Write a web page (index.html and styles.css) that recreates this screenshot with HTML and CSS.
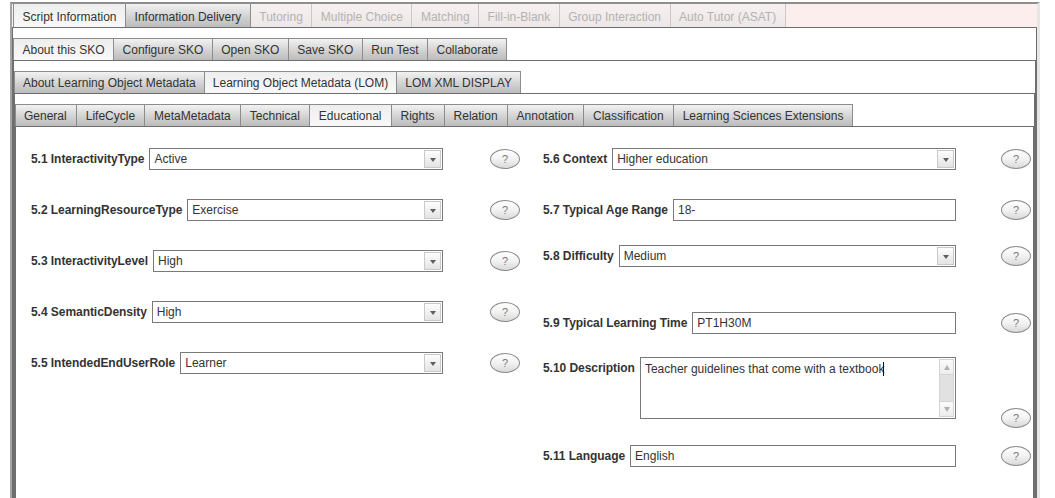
FILE: index.html
```html
<!DOCTYPE html>
<html>
<head>
<meta charset="utf-8">
<title>Educational</title>
<link rel="stylesheet" href="styles.css">
</head>
<body>
<div class="frame">
  <div class="tabbar top mid">
    <div class="tab sel">Script Information</div>
    <div class="tab">Information Delivery</div>
    <div class="tab dis">Tutoring</div>
    <div class="tab dis">Multiple Choice</div>
    <div class="tab dis">Matching</div>
    <div class="tab dis">Fill-in-Blank</div>
    <div class="tab dis">Group Interaction</div>
    <div class="tab dis">Auto Tutor (ASAT)</div>
  </div>
  <div class="panel">
    <div class="tabbar mid">
      <div class="tab sel">About this SKO</div>
      <div class="tab">Configure SKO</div>
      <div class="tab">Open SKO</div>
      <div class="tab">Save SKO</div>
      <div class="tab">Run Test</div>
      <div class="tab">Collaborate</div>
    </div>
    <div class="panel">
      <div class="tabbar">
        <div class="tab">About Learning Object Metadata</div>
        <div class="tab sel">Learning Object Metadata (LOM)</div>
        <div class="tab">LOM XML DISPLAY</div>
      </div>
      <div class="panel">
        <div class="tabbar wide">
          <div class="tab">General</div>
          <div class="tab">LifeCycle</div>
          <div class="tab">MetaMetadata</div>
          <div class="tab">Technical</div>
          <div class="tab sel">Educational</div>
          <div class="tab">Rights</div>
          <div class="tab">Relation</div>
          <div class="tab">Annotation</div>
          <div class="tab">Classification</div>
          <div class="tab">Learning Sciences Extensions</div>
        </div>
        <div class="panel content">
          <div class="col left">
            <div class="row">
              <div class="field"><span class="lbl">5.1 InteractivityType</span><div class="box select"><span class="val">Active</span><span class="dd"></span></div></div>
              <div class="help">?</div>
            </div>
            <div class="row">
              <div class="field"><span class="lbl">5.2 LearningResourceType</span><div class="box select"><span class="val">Exercise</span><span class="dd"></span></div></div>
              <div class="help">?</div>
            </div>
            <div class="row">
              <div class="field"><span class="lbl">5.3 InteractivityLevel</span><div class="box select"><span class="val">High</span><span class="dd"></span></div></div>
              <div class="help">?</div>
            </div>
            <div class="row">
              <div class="field"><span class="lbl">5.4 SemanticDensity</span><div class="box select"><span class="val">High</span><span class="dd"></span></div></div>
              <div class="help">?</div>
            </div>
            <div class="row">
              <div class="field"><span class="lbl">5.5 IntendedEndUserRole</span><div class="box select"><span class="val">Learner</span><span class="dd"></span></div></div>
              <div class="help">?</div>
            </div>
          </div>
          <div class="col right">
            <div class="row">
              <div class="field"><span class="lbl">5.6 Context</span><div class="box select"><span class="val">Higher education</span><span class="dd"></span></div></div>
              <div class="help">?</div>
            </div>
            <div class="row">
              <div class="field"><span class="lbl">5.7 Typical Age Range</span><div class="box"><span class="val">18-</span></div></div>
              <div class="help">?</div>
            </div>
            <div class="row mt24">
              <div class="field"><span class="lbl">5.8 Difficulty</span><div class="box select"><span class="val">Medium</span><span class="dd"></span></div></div>
              <div class="help">?</div>
            </div>
            <div class="row mt45">
              <div class="field"><span class="lbl">5.9 Typical Learning Time</span><div class="box"><span class="val">PT1H30M</span></div></div>
              <div class="help">?</div>
            </div>
            <div class="row tall mt23">
              <div class="field"><span class="lbl">5.10 Description</span><div class="box area"><span class="text">Teacher guidelines that come with a textbook<span class="caret"></span></span><span class="sb"><span class="sb-btn up"></span><span class="sb-thumb"></span><span class="sb-btn down"></span></span></div></div>
              <div class="help">?</div>
            </div>
            <div class="row mt26">
              <div class="field"><span class="lbl">5.11 Language</span><div class="box"><span class="val">English</span></div></div>
              <div class="help">?</div>
            </div>
          </div>
        </div>
      </div>
    </div>
  </div>
</div>
</body>
</html>
```

FILE: styles.css
```css
* { box-sizing: border-box; }
html, body { margin: 0; height: 498px; overflow: hidden; background: #fff; }
body { font-family: "Liberation Sans", Arial, sans-serif; font-size: 12px; color: #333; }

.frame {
  margin: 2px 0 0 10px;
  width: 1030px;
  height: 496px;
  border-top: 2px solid #8e8e8e;
  border-left: 2px solid #a4a4a4;
  border-right: 3px solid #e6e6e6;
  display: flex;
  flex-direction: column;
}

.tabbar { display: flex; height: 22px; flex: none; }
.tabbar.top { height: 23px; background: #fdeeee; padding-left: 1px; }
.tabbar.top .tab { border-top: none; padding-top: 3px; line-height: 20px; }

.panel {
  flex: 1;
  display: flex;
  flex-direction: column;
  border: 1px solid #6e6e6e;
  border-bottom: none;
  padding-top: 10px;
  min-height: 0;
}

.tab {
  height: 100%;
  padding: 2px 8px 0 8px;
  line-height: 19px;
  border-top: 1px solid #8c8c8c;
  border-right: 1px solid #8c8c8c;
  background: linear-gradient(#f2f2f2, #d2d2d2 55%, #bcbcbc);
  white-space: nowrap;
  color: #333;
}
.tabbar.mid .tab { padding-left: 8.5px; padding-right: 8.5px; }
.tabbar.wide .tab { padding-left: 9px; padding-right: 9px; }
.tabbar.wide .tab:first-child { padding-left: 8px; }
.tab:first-child { border-left: 1px solid #8c8c8c; }
.tab.sel { background: linear-gradient(#eeeeee, #f8f8f8); }
.tab.dis {
  color: #b3b3b3;
  background: linear-gradient(#f7f1f1, #ece6e6);
  border-right-color: #cdc8c8;
}

.content {
  flex-direction: row;
  align-items: flex-start;
  padding: 21px 0 0 15px;
  background: #fff;
}

.col { display: flex; flex-direction: column; }
.col.left { width: 489px; }
.col.right { width: 488px; margin-left: 23px; }

.row { display: flex; align-items: center; height: 22px; flex: none; }
.row + .row { margin-top: 29px; }
.row.mt24 { margin-top: 24px; }
.row.mt45 { margin-top: 45px; }
.row.mt23 { margin-top: 23px; }
.row.mt26 { margin-top: 26px; }

.field { display: flex; align-items: center; width: 412px; height: 100%; }
.right .field { width: 413px; }
.lbl { font-weight: bold; white-space: nowrap; margin-right: 5px; color: #333; letter-spacing: -0.05px; }

.box {
  flex: 1;
  height: 22px;
  border: 1px solid #7a7a7a;
  background: #fff;
  display: flex;
  align-items: center;
  min-width: 0;
}
.val { flex: 1; padding-left: 4px; white-space: nowrap; color: #333; }

.dd {
  width: 17px;
  height: 18px;
  margin-right: 1px;
  border: 1px solid #c9c9c9;
  background: linear-gradient(#fdfdfd, #e4e4e4);
  display: flex;
  align-items: center;
  justify-content: center;
}
.dd::after {
  content: "";
  border-left: 3.5px solid transparent;
  border-right: 3.5px solid transparent;
  border-top: 4px solid #5e5e5e;
  margin-top: 1px;
}

.help {
  width: 30px;
  height: 20px;
  margin-left: 47px;
  border: 1px solid #8c8c8c;
  border-radius: 50%;
  background: linear-gradient(#ffffff, #f2f2f2 50%, #d9d9d9);
  color: #7a7a7a;
  font-size: 11px;
  line-height: 18px;
  text-align: center;
  flex: none;
}
.right .help { margin-left: 45px; }

.row.tall { height: 62px; align-items: flex-start; }
.row.tall .field { align-items: flex-start; }
.row.tall .lbl { margin-top: 4px; line-height: 14px; }
.row.tall .help { align-self: flex-end; margin-bottom: -9px; }

.box.area { height: 62px; align-items: stretch; }
.text { flex: 1; padding: 4px 4px 0 4px; line-height: 14px; white-space: nowrap; color: #333; }
.caret { display: inline-block; width: 1px; height: 14px; background: #111; vertical-align: -3px; margin-left: -1px; }

.sb {
  width: 15px;
  display: flex;
  flex-direction: column;
  border-left: 1px solid #d4d4d4;
  margin: 1px 1px 1px 0;
}
.sb-btn {
  height: 16px;
  background: linear-gradient(#fbfbfb, #ededed);
  border: 1px solid #d4d4d4;
  border-left: none;
  display: flex;
  align-items: center;
  justify-content: center;
}
.sb-btn.up::after {
  content: "";
  border-left: 3.5px solid transparent;
  border-right: 3.5px solid transparent;
  border-bottom: 5px solid #b0b0b0;
}
.sb-btn.down::after {
  content: "";
  border-left: 3.5px solid transparent;
  border-right: 3.5px solid transparent;
  border-top: 5px solid #b0b0b0;
}
.sb-thumb { flex: 1; background: #e1e1e1; border-right: 1px solid #d4d4d4; }
```
